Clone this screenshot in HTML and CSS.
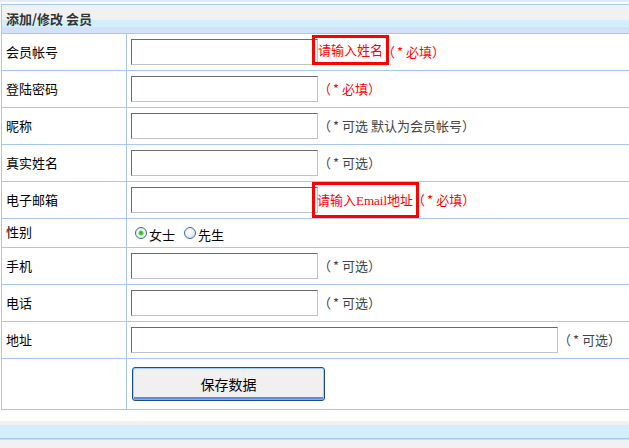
FILE: index.html
```html
<!DOCTYPE html>
<html lang="zh-CN">
<head>
<meta charset="utf-8">
<title>添加/修改 会员</title>
<link rel="stylesheet" href="styles.css">
</head>
<body>
<div class="prev-strip"></div>
<form class="panel">
  <div class="panel-title">添加/修改 会员</div>
  <div class="row">
    <div class="label">会员帐号</div>
    <div class="field"><input class="text" type="text"><span class="tip">请输入姓名</span><span class="hint hint--req">（<span class="star">*</span>必填）</span></div>
  </div>
  <div class="row">
    <div class="label">登陆密码</div>
    <div class="field"><input class="text" type="password"><span class="hint hint--req hint--gap">（<span class="star">*</span>必填）</span></div>
  </div>
  <div class="row">
    <div class="label">昵称</div>
    <div class="field"><input class="text" type="text"><span class="hint hint--gap">（<span class="star">*</span>可选 默认为会员帐号）</span></div>
  </div>
  <div class="row">
    <div class="label">真实姓名</div>
    <div class="field"><input class="text" type="text"><span class="hint hint--gap">（<span class="star">*</span>可选）</span></div>
  </div>
  <div class="row">
    <div class="label">电子邮箱</div>
    <div class="field"><input class="text" type="text"><span class="tip tip--tall">请输入<span class="latin">Email</span>地址</span><span class="hint hint--req">（<span class="star">*</span>必填）</span></div>
  </div>
  <div class="row row--short">
    <div class="label label--top">性别</div>
    <div class="field field--radios">
      <label class="radio"><input type="radio" name="sex" checked><span>女士</span></label>
      <label class="radio"><input type="radio" name="sex"><span>先生</span></label>
    </div>
  </div>
  <div class="row">
    <div class="label">手机</div>
    <div class="field"><input class="text" type="text"><span class="hint hint--gap">（<span class="star">*</span>可选）</span></div>
  </div>
  <div class="row">
    <div class="label">电话</div>
    <div class="field"><input class="text" type="text"><span class="hint hint--gap">（<span class="star">*</span>可选）</span></div>
  </div>
  <div class="row">
    <div class="label">地址</div>
    <div class="field"><input class="text text--wide" type="text"><span class="hint hint--gap">（<span class="star">*</span>可选）</span></div>
  </div>
  <div class="row row--submit">
    <div class="label"></div>
    <div class="field field--submit"><button class="btn" type="button">保存数据</button></div>
  </div>
</form>
<div class="next-strip"></div>
</body>
</html>
```
FILE: styles.css
```css
html, body {
  margin: 0;
  padding: 0;
  overflow: hidden;
  background: #fff;
}
body {
  font-family: "Noto Sans CJK SC", "Noto Sans", sans-serif;
  font-size: 13px;
  color: #000;
}
.prev-strip {
  height: 4px;
  background: linear-gradient(#e3eaf8 0, #e3eaf8 2px, #fbfcfe 2px, #fbfcfe 4px);
}
.panel {
  display: block;
  margin: 0 0 0 1px;
  width: 700px;
  border-top: 1px solid #a9c8ef;
  border-left: 1px solid #a9c8ef;
  border-bottom: 1px solid #a9c8ef;
}
.panel-title {
  height: 29px;
  box-sizing: border-box;
  padding: 0 0 2px 4px;
  display: flex;
  align-items: center;
  font-weight: bold;
  color: #333;
  font-size: 13px;
  border-bottom: 1px solid #a9c8ef;
  background: linear-gradient(#f1f1f1 0, #f1f1f1 15px, #d4effc 15px, #d4effc 22px, #d3e1fc 22px, #d3e1fc 28px);
}
.row {
  display: grid;
  grid-template-columns: 125px 1fr;
  height: 37px;
  box-sizing: border-box;
  border-bottom: 1px solid #a9c8ef;
}
.row--short { height: 29px; }
.row--submit { height: 50px; border-bottom: none; }
.label {
  box-sizing: border-box;
  border-right: 1px solid #a9c8ef;
  padding: 0 0 2px 4px;
  display: flex;
  align-items: center;
}
.label--top { padding-bottom: 4px; }
.field {
  padding-left: 4px;
  height: 36px;
  line-height: 36px;
  white-space: nowrap;
}
.text {
  box-sizing: border-box;
  vertical-align: top;
  width: 187px;
  height: 26px;
  margin: 5px 0 0 0;
  padding: 0 3px;
  border: 1px solid;
  border-color: #6b6b6b #c3c3c3 #c3c3c3 #6b6b6b;
  background: #fff;
  font: inherit;
  outline: none;
}
.text--wide { width: 427px; }
.hint {
  color: #444;
  vertical-align: 2px;
  margin-left: -7px;
}
.hint--gap { margin-left: 0; }
.hint--req { color: #f00; }
.star {
  margin: 0 3px 0 2px;
}
.tip {
  display: inline-block;
  vertical-align: top;
  position: relative;
  margin: 1px 0 0 -6px;
  padding: 0 3px 0 3px;
  border: 3px solid #f00;
  line-height: 24px;
  color: #f00;
}
.tip--tall {
  line-height: 29px;
  margin-top: 0;
  padding: 0 3px 0 2px;
}
.latin {
  font-family: "Liberation Serif", serif;
  font-size: 13px;
}
.field--radios {
  height: 28px;
  display: flex;
  align-items: center;
  line-height: normal;
}
.radio {
  display: flex;
  align-items: center;
  margin-left: 4px;
  margin-right: 5px;
}
.radio + .radio { margin-left: 4px; }
.radio span { margin-top: 3px; }
.radio input {
  -webkit-appearance: none;
  appearance: none;
  box-sizing: border-box;
  width: 12px;
  height: 12px;
  margin: 0 2px 0 0;
  border: 1px solid #3a6e96;
  border-radius: 50%;
  background: radial-gradient(circle at 40% 35%, #ffffff 0, #f4f4f4 35%, #d6d6d6 100%);
}
.radio input:checked {
  background: radial-gradient(circle, #1fb31f 0, #4dd24d 2px, #f6f6f6 3px, #e4e4e4 100%);
}
.field--submit {
  height: 50px;
  display: flex;
  align-items: center;
  line-height: normal;
}
.btn {
  box-sizing: border-box;
  margin-left: 1px;
  width: 193px;
  height: 34px;
  border: 1px solid #1d4f80;
  border-radius: 3px;
  background: #f0f0f0;
  box-shadow: inset 1px 1px 0 #a6cbf6, inset -1px 0 0 #a6cbf6, inset 0 -1px 0 #86adf0, inset 0 -3px 0 #5f8be8;
  font-family: "Noto Sans CJK SC", sans-serif;
  font-size: 14px;
  color: #000;
  padding: 0;
}
.next-strip {
  margin-top: 11px;
  height: 27px;
  background: linear-gradient(#f0f0f0 0, #f0f0f0 4px, #d4eefc 4px, #d4eefc 17px, #a9c8ef 17px, #a9c8ef 18px, #c8dcf4 18px, #c8dcf4 19px, #f1f1f1 19px);
}
```
